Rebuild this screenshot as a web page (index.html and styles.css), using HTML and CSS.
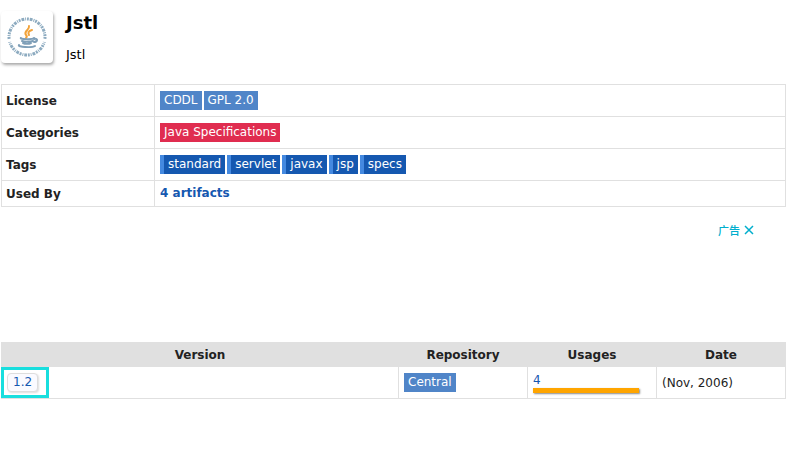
FILE: index.html
```html
<!DOCTYPE html>
<html lang="en">
  <head>
    <meta charset="utf-8">
    <title>Jstl</title>
    <link rel="stylesheet" href="styles.css">
  </head>
  <body>
    <div class="im">
      <svg class="im-logo" viewBox="0 0 52 52" role="img" aria-label="Java Community Process">
        <g class="logo-ring">
          <circle cx="26" cy="26" r="18" stroke-dasharray="2 1 3 1 1 1" pathLength="120" />
        </g>
        <g class="logo-gap">
          <path d="M5 30l6-1M41 29l6 1" />
        </g>
        <g class="logo-steam">
          <path d="M28 15c1 4-6 5-3 9 1 1 1 2 0 3M31 19c-4 1-4 3-3 5" />
        </g>
        <g class="logo-cup">
          <path d="M20 27c-2 1 11 2 13 0M21 30c2 1 8 1 11 0M22 32c2 1 6 1 8 0M33 28c5-1 3 3 0 3M18 34c-2 2 13 3 16 1" />
        </g>
      </svg>
      <div class="im-header">
        <h2 class="im-title">Jstl</h2>
        <p class="im-description">Jstl</p>
      </div>
    </div>

    <table class="grid info">
      <tbody>
        <tr>
          <th scope="row">License</th>
          <td><span class="b lic">CDDL</span><span class="b lic">GPL 2.0</span></td>
        </tr>
        <tr>
          <th scope="row">Categories</th>
          <td><a href="#" class="b c">Java Specifications</a></td>
        </tr>
        <tr>
          <th scope="row">Tags</th>
          <td><a href="#" class="b tag">standard</a><a href="#" class="b tag">servlet</a><a href="#" class="b tag">javax</a><a href="#" class="b tag">jsp</a><a href="#" class="b tag">specs</a></td>
        </tr>
        <tr>
          <th scope="row">Used By</th>
          <td><a href="#" class="used">4 artifacts</a></td>
        </tr>
      </tbody>
    </table>

    <div class="ad">
      <span lang="zh">广告</span>
      <button type="button" class="ad-close" aria-label="Close">
        <svg viewBox="0 0 10 10"><path d="M1 1l8 8M9 1l-8 8" /></svg>
      </button>
    </div>

    <table class="grid versions">
      <colgroup>
        <col>
        <col class="narrow">
        <col class="narrow">
        <col class="narrow">
      </colgroup>
      <thead>
        <tr><th>Version</th><th>Repository</th><th>Usages</th><th>Date</th></tr>
      </thead>
      <tbody>
        <tr>
          <td class="marked"><a href="#" class="vbtn">1.2</a></td>
          <td><a href="#" class="b lic">Central</a></td>
          <td><a href="#" class="usage">4<span class="bar"></span></a></td>
          <td>(Nov, 2006)</td>
        </tr>
      </tbody>
    </table>
  </body>
</html>
```
FILE: styles.css
```css
body {
    margin: 0;
    padding: 11px 8px 0 1px;
    background: #fff;
    color: #222;
    font: 12px/18px Verdana, "DejaVu Sans", sans-serif;
}

a {
    color: #1558b0;
    text-decoration: none;
}

.im {
    display: flex;
    gap: 13px;
    color: #000;
}

.im-logo {
    width: 52px;
    height: 52px;
    border-radius: 4px;
    box-shadow: 1px 2px 3px #aaa;
}

.im-logo g {
    fill: none;
    stroke-linecap: round;
}

.logo-ring {
    stroke: #8dabc0;
    stroke-width: 3;
}

.logo-ring circle {
    stroke-linecap: butt;
}

.logo-gap {
    stroke: #fff;
    stroke-width: 3;
}

.logo-steam {
    stroke: #f2a33a;
    stroke-width: 2;
}

.logo-cup {
    stroke: #7f9fb8;
    stroke-width: 2;
}

.im-title {
    margin: 0 0 10px;
    font-size: 18px;
    line-height: 24px;
}

.im-description {
    margin: 0;
    font-size: 13px;
    line-height: 20px;
}

.grid {
    width: 100%;
    border-collapse: collapse;
}

.grid th,
.grid td {
    padding: 3px 5px;
    border: 1px solid #e0e0e0;
    text-align: left;
}

.info {
    margin-top: 19px;
}

.info th {
    width: 143px;
    padding-left: 4px;
}

.info .used {
    font-weight: bold;
    line-height: 19px;
}

.b {
    display: inline-block;
    margin: 3px 2px 3px 0;
    padding: 0 4px;
    color: #fff;
    line-height: 19px;
    vertical-align: top;
}

.lic {
    background: #5085c8;
}

.c {
    background: #e02d50;
}

.tag {
    border-left: 4px solid #4489e0;
    background: #1558b0;
}

.ad {
    display: flex;
    align-items: flex-start;
    gap: 4px;
    height: 120px;
    margin: 15px 32px 0 0;
    justify-content: flex-end;
    color: #00aecd;
    font: 500 11px/16px "Noto Sans CJK SC", sans-serif;
}

.ad-close {
    width: 10px;
    padding: 3px 0;
    border: 0;
    background: none;
}

.ad-close svg {
    display: block;
    fill: none;
    stroke: #00aecd;
    stroke-width: 1.5;
}

.versions {
    table-layout: fixed;
}

.narrow {
    width: 129px;
}

.versions th {
    padding: 3px 5px 2px;
    background: #e0e0e0;
    text-align: center;
}

.marked {
    position: relative;
}

/* highlight frame over the version cell */
.marked::after {
    content: "";
    position: absolute;
    top: 0;
    bottom: 0;
    left: -1px;
    width: 42px;
    border: 3px solid #18dede;
    pointer-events: none;
}

.vbtn {
    display: inline-block;
    padding: 0 5px;
    border: 1px solid #ddd;
    border-radius: 4px;
    background: #fafaff;
    box-shadow: 1px 1px 2px #ddd;
    line-height: 17px;
}

.usage {
    display: block;
    line-height: 16px;
}

.bar {
    display: block;
    width: 90%;
    height: 5px;
    background: #ffa500;
    box-shadow: 1px 1px 2px #888;
}
```
